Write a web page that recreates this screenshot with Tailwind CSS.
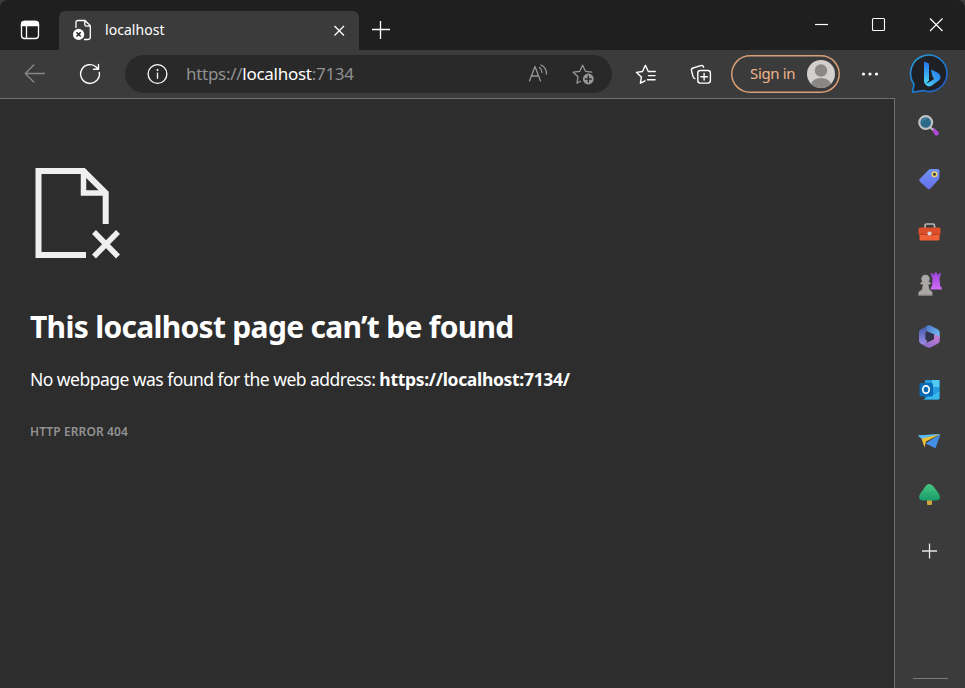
<!DOCTYPE html>
<html lang="en">
<head>
    <meta charset="UTF-8">
    <meta name="viewport" content="width=device-width, initial-scale=1.0">
    <title>localhost</title>
    <script src="https://cdn.jsdelivr.net/npm/@tailwindcss/browser@4"></script>
    <style>
        body { font-family: 'Noto Sans', 'Open Sans', sans-serif; }
    </style>
</head>
<body class="bg-[#3b3b3b] text-white h-screen overflow-hidden flex flex-col">

    <!-- Title bar -->
    <header class="h-[50px] shrink-0 bg-[#1f1f1f] rounded-t-lg flex">
        <button class="w-[59px] pt-[10px] flex justify-center">
            <svg class="w-10 h-10" viewBox="10 10 40 40" fill="none" stroke="#fff" stroke-width="1.3">
                <rect x="21.5" y="21.5" width="17" height="17" rx="3"/>
                <path d="M21.5 25.5V24.5a3 3 0 0 1 3-3h11a3 3 0 0 1 3 3V25.5z" fill="#fff"/>
                <path d="M26.5 26v12.5"/>
            </svg>
        </button>
        <div class="w-[300px] mt-[11px] bg-[#3b3b3b] rounded-t-md flex items-center pl-[13px] pr-[12px] pb-px">
            <svg class="w-5 h-[22px]" viewBox="72 19 20 22" fill="none" stroke="#fff" stroke-width="1.3" stroke-linejoin="round">
                <path d="M76 28v-5.5a2 2 0 0 1 2-2h7l5.3 5.3V37a2.5 2.5 0 0 1-2.5 2.5H84M84.8 20.7v3.8a1.6 1.6 0 0 0 1.6 1.6h3.7"/>
                <circle cx="78.6" cy="34.4" r="5.6" fill="#fff" stroke="none"/>
                <path d="M76.5 32.3l4.2 4.2m0-4.2l-4.2 4.2" stroke="#222" stroke-width="1.5"/>
            </svg>
            <span class="ml-[13px] text-[14px] leading-5 tracking-[0.05px]">localhost</span>
            <svg class="ml-auto w-4 h-4 mt-[1px]" viewBox="0 0 16 16" stroke="#fff" stroke-width="1.3"><path d="M3.5 3l9.5 9.5M13 3L3.5 12.5"/></svg>
        </div>
        <button class="w-[43px] pt-[19px] flex justify-center">
            <svg class="w-[22px] h-[22px]" viewBox="0 0 22 22" stroke="#fff" stroke-width="1.3"><path d="M2 10.5h18M10.5 2v18"/></svg>
        </button>
        <div class="ml-auto flex pt-[15px]">
            <svg class="w-[57px] h-5" viewBox="793 15 57 20" stroke="#fff" stroke-width="1.2"><path d="M815 24.5h13"/></svg>
            <svg class="w-[57px] h-5" viewBox="850 15 57 20" fill="none" stroke="#fff" stroke-width="1.1"><rect x="872.5" y="18.5" width="12" height="12" rx="1"/></svg>
            <svg class="w-[58px] h-5" viewBox="907 15 58 20" stroke="#fff" stroke-width="1.2"><path d="M930 18.5l12.5 12.5M942.5 18.5L930 31"/></svg>
        </div>
    </header>

    <!-- Toolbar -->
    <nav class="h-12 shrink-0 flex items-center">
        <svg class="w-[70px] h-12" viewBox="0 50 70 48" fill="none" stroke="#888" stroke-width="1.3" stroke-linecap="round" stroke-linejoin="round"><path d="M44.5 73.5H25.3M33.8 65l-8.5 8.5 8.5 8.5"/></svg>
        <svg class="w-[55px] h-12" viewBox="70 50 55 48" fill="none" stroke="#fff" stroke-width="1.4" stroke-linecap="round" stroke-linejoin="round"><path d="M99.3 72.5A9.4 9.4 0 1 1 96.5 67.2L98.2 69M98.5 64.5V69.3H93.5"/></svg>
        <div class="w-[487px] h-[38px] bg-[#292929] rounded-full flex items-center">
            <svg class="ml-[22px] w-[22px] h-[22px]" viewBox="0 0 22 22" fill="none" stroke="#fff" stroke-width="1.3">
                <circle cx="10.5" cy="11" r="9.4"/><path d="M10.5 9.6v6.2"/><circle cx="10.5" cy="6.9" r="1" fill="#fff" stroke="none"/>
            </svg>
            <span class="ml-[17px] text-[17px] leading-6 tracking-[-0.28px] text-[#919191] whitespace-nowrap">https://<span class="text-white">localhost</span>:7134</span>
            <svg class="ml-auto mr-[14px] w-[76px] h-[38px]" viewBox="522 55 76 38" fill="none" stroke="#979797" stroke-width="1.3" stroke-linecap="round" stroke-linejoin="round">
                <path d="M529.5 81l5.5-14.5 5.5 14.5M531.5 76h7M539.5 67.5q2.5 2 2.5 5M541 65q5.5 2.5 5.5 9"/>
                <path d="M580.5 81.3l-3.5 1.9 1-6.5-4.8-4.5 6.5-.9 2.9-6.1 2.9 6.1 6.3.9"/>
                <circle cx="588.3" cy="79" r="5.4" fill="#979797" stroke="none"/>
                <path d="M588.3 76v6M585.3 79h6" stroke="#292929" stroke-width="1.4"/>
            </svg>
        </div>
        <svg class="w-[69px] h-12" viewBox="612 50 69 48" fill="none" stroke="#fff" stroke-width="1.4" stroke-linecap="round" stroke-linejoin="round">
            <path d="M645 80.800l-4.600 2.400 1-6.300-4.900-4.500 6-.9 2.900-6.200 2.900 6.200h7M648.5 75.600h6.600M647.5 79.700h7.600"/>
        </svg>
        <svg class="w-[50px] h-12" viewBox="681 50 50 48" fill="none" stroke="#fff" stroke-width="1.4" stroke-linecap="round" stroke-linejoin="round">
            <rect x="697.8" y="70.5" width="12.6" height="12.6" rx="2.5"/>
            <path d="M704.1 73.5v6.600M700.8 76.800h6.600M694.8 78.5c-1.200-.3-1.5-1-1.800-2.200l-1.5-5.600c-.3-1.400.3-2.300 1.600-2.700l7.600-2.300c1.5-.4 2.600.2 3 1.5"/>
        </svg>
        <button class="w-[109px] h-[38px] inset-ring-[1.5px] inset-ring-[#d9a078] rounded-full flex items-center justify-between pl-[19px] pr-[5px] text-[#f0b48a]">
            <span class="pb-0.5 text-[15px] leading-5 tracking-[-0.35px] whitespace-nowrap">Sign in</span>
            <svg class="w-7 h-7" viewBox="0 0 28 28">
                <defs><clipPath id="face"><circle cx="14" cy="14" r="14"/></clipPath></defs>
                <g clip-path="url(#face)"><rect width="28" height="28" fill="#d2d0ce"/><circle cx="14" cy="10.5" r="6.2" fill="#8a8886"/><ellipse cx="14" cy="24.5" rx="10" ry="6.5" fill="#8a8886"/></g>
            </svg>
        </button>
        <svg class="w-[60px] h-12" viewBox="840 50 60 48" fill="#fff"><circle cx="863.5" cy="74" r="1.6"/><circle cx="870" cy="74" r="1.6"/><circle cx="876.5" cy="74" r="1.6"/></svg>
        <svg class="w-[65px] h-12" viewBox="896.5 50 65 48">
            <defs>
                <linearGradient id="ring" x1="0" y1="0" x2="1" y2="1"><stop stop-color="#2ea2dc"/><stop offset=".5" stop-color="#187fd3"/><stop offset="1" stop-color="#2754c4"/></linearGradient>
                <linearGradient id="bing" x1="0" y1="0" x2="0" y2="1"><stop stop-color="#2870ea"/><stop offset="1" stop-color="#4bd5f5"/></linearGradient>
                <linearGradient id="bing2" x1="0" y1="1" x2="1" y2="0"><stop stop-color="#4bd5f5"/><stop offset="1" stop-color="#2474ec"/></linearGradient>
            </defs>
            <path d="M909 92.3l1.5-8.3A18.2 18.2 0 1 1 919.5 90.6Z" fill="#1e2025" stroke="url(#ring)" stroke-width="1.6" stroke-linejoin="round"/>
            <path d="M920.5 61.5l4 1.6c.7.3 1 .8 1 1.5V80.5l-3.3 3.2c-1.1-.6-1.7-1.700-1.7-3z" fill="url(#bing)"/>
            <path d="M927.5 69.5l5.8 2.7c3.8 1.6 4.7 5.1 2.7 7.7l-8 5.8c-2 1.4-4.3 1-6-1.1-.8-.8-1.2-1.6-1.3-2.5 1.5 1.5 3 1.2 4.8.2l5.2-3.3-1.5-2.3c-.8-2.1-1.2-4.4-1.7-7.2z" fill="url(#bing2)"/>
        </svg>
    </nav>

    <div class="flex flex-1 min-h-0">
        <!-- Error page -->
        <main class="w-[895px] bg-[#2d2d2d] border-t border-r border-[#707070] pl-[30px] pt-[68px]">
            <svg class="w-[92px] h-[94px]" viewBox="30 167 92 94" fill="none" stroke="#efefef" stroke-width="6">
                <path d="M86 255H38.5V171H83.5L105.7 193V224"/>
                <path d="M83.5 169V193H107" stroke-width="5.5"/>
                <path d="M94 232l24 24.5M118 232L94 256.5" stroke-width="5.5"/>
            </svg>
            <h1 class="mt-[46px] text-[30px] leading-10 font-bold tracking-[-0.7px] whitespace-nowrap">This localhost page can’t be found</h1>
            <p class="mt-[20px] text-[17.5px] leading-6 whitespace-nowrap"><span class="tracking-[-0.53px]">No webpage was found for the web address: </span><strong class="tracking-[-0.32px]">https://localhost:7134/</strong></p>
            <p class="mt-[31px] text-[12px] leading-5 tracking-[0.1px] text-[#929292] font-semibold whitespace-nowrap">HTTP ERROR 404</p>
        </main>

        <!-- Sidebar -->
        <aside class="flex-1 flex flex-col items-center pt-[13px] pb-[9px] pr-0.5">
            <svg class="w-8 h-8 -mt-0.5" viewBox="913 109 32 32">
                <path d="M931.5 129l2.5-1 4.5 4q1 3-1.5 3.5-1 .3-2-.5z" fill="#b34bd8"/>
                <path d="M930 127l3 3" stroke="#bbb" stroke-width="2"/>
                <circle cx="925.7" cy="122.5" r="6.4" fill="#2d6a8a" stroke="#c0c3c5" stroke-width="2.2"/>
                <path d="M922.5 122a3.5 3.5 0 0 1 4-3" stroke="#4f91b2" fill="none"/>
            </svg>
            <svg class="w-8 h-8 mt-[22px]" viewBox="913 163 32 32">
                <defs><linearGradient id="tag" x1="0" y1="0" x2="0" y2="1"><stop stop-color="#6e91f8"/><stop offset="1" stop-color="#6670ea"/></linearGradient></defs>
                <path d="M919.7 179l8.8-9.1q.8-.8 2-.8l7.3-.1q1.7 0 1.7 1.7l-.2 7q0 1.2-.9 2.1l-8.2 9q-1.2 1.2-2.5 0l-8-7.3q-1.2-1.3 0-2.5z" fill="url(#tag)"/>
                <circle cx="934.5" cy="174.2" r="2.3" fill="#3a3c47" stroke="#f0d568" stroke-width="1.5"/>
            </svg>
            <svg class="w-8 h-8 mt-[21px]" viewBox="913 216 32 32">
                <path d="M925 228v-2.5q0-1.5 1.5-1.5h6.5q1.5 0 1.5 1.5v2.5" fill="none" stroke="#b9b5b3" stroke-width="1.7"/>
                <rect x="918.5" y="227.5" width="22" height="7.5" rx="1.5" fill="#dd4f2b"/>
                <path d="M919.5 234h20v5q0 1.5-1.5 1.5h-17q-1.5 0-1.5-1.5z" fill="#ef6036"/>
                <path d="M919 234q10.5 1.5 21 0" stroke="#b63920" fill="none"/>
                <circle cx="929.5" cy="233.5" r="2.1" fill="#d9d5d2"/>
            </svg>
            <svg class="w-8 h-8 mt-[20px]" viewBox="913 268 32 32">
                <defs><linearGradient id="rook" x1="0" y1="0" x2="0" y2="1"><stop stop-color="#9b45df"/><stop offset="1" stop-color="#d06cf8"/></linearGradient></defs>
                <path d="M930.5 273h2v1.5h2v-2h2.6v2h2V273h2l-1.6 5.5.7 7.5 1.5 1.5v2h-11v-2l1.3-1.5.5-7.5z" fill="url(#rook)"/>
                <g fill="#aaa8a6"><circle cx="925.5" cy="279" r="4.2"/><rect x="920.5" y="282" width="10" height="2.5" rx="1.2"/><path d="M923 284h5.3l1 5.5 3 2.5v3.5h-13.8V292l3.5-2.5z"/></g>
                <path d="M918.5 295h14" stroke="#898583"/>
            </svg>
            <svg class="w-8 h-8 mt-[20px]" viewBox="913 320 32 32">
                <defs>
                    <linearGradient id="m1" x1="0" y1="0" x2="0" y2="1"><stop stop-color="#4157a8"/><stop offset="1" stop-color="#9b8ce9"/></linearGradient>
                    <linearGradient id="m2" x1="0" y1="0" x2="1" y2="1"><stop stop-color="#4c75ca"/><stop offset="1" stop-color="#78c4f7"/></linearGradient>
                    <linearGradient id="m3" x1="0" y1="1" x2="1" y2="0"><stop stop-color="#8168cb"/><stop offset="1" stop-color="#ca80d2"/></linearGradient>
                </defs>
                <path d="M928 325.5l-7.5 4q-1.5 1-1.5 3v8q0 2 1.5 3l3 1.2q3.5-.7 3.5-4.2l-1.5-1v-6z" fill="url(#m1)"/>
                <path d="M926.5 326q2.5-1.5 5 0l6.5 3.5q1.7 1 1.7 3v6l-5.7-4-7.5-3.5z" fill="url(#m2)"/>
                <path d="M939.7 337v3.5q0 2-1.7 3l-6.5 3.6q-2.5 1.3-5 0l-5.5-3q3 .5 5.5-1l7.5-4.2v-4.5q5.5 1 5.7 2.6z" fill="url(#m3)"/>
                <path d="M926.5 331.5l7.5 3v4.2l-4.7 2.6-3.6-2.3v-5.2z" fill="#303249"/>
            </svg>
            <svg class="w-8 h-8 mt-[21px]" viewBox="913 373 32 32">
                <path d="M925 380h13q1.5 0 1.5 1.5V398q0 1.5-1.5 1.5h-13z" fill="#1687d4"/>
                <path d="M925 380h7v7h-7z" fill="#239cdf"/><path d="M932 380h7.5v7H932z" fill="#50c9f3"/><path d="M932 387h7.5v6H932z" fill="#249bdf"/>
                <path d="M923 399.5l16.5-8v6.5q0 1.5-1.5 1.5z" fill="#38b8ed"/>
                <rect x="919.5" y="383" width="13.5" height="13.5" rx="1.5" fill="#096ab5"/>
                <ellipse cx="926" cy="389.5" rx="3.2" ry="3.7" fill="none" stroke="#fff" stroke-width="1.7"/>
            </svg>
            <svg class="w-8 h-8 mt-[20px]" viewBox="913 425 32 32">
                <path d="M918 435.5l22.5-1.5-17 6.5z" fill="#48aaf0"/>
                <path d="M925.5 443.5L940.5 434l-5 14.3z" fill="#438fe8"/>
                <path d="M921.5 438.5l19-4.5-14.5 7.5-1.5 6z" fill="#eabf38"/>
                <path d="M918 435.5l22.5-1.5-19 4.5z" fill="#5dbcf4"/>
            </svg>
            <svg class="w-8 h-8 mt-[22px]" viewBox="913 479 32 32">
                <defs><linearGradient id="leaf" x1="0" y1="0" x2="0" y2="1"><stop stop-color="#4ac681"/><stop offset="1" stop-color="#169b68"/></linearGradient></defs>
                <rect x="927" y="499" width="5" height="6" rx="1" fill="#d3a440"/>
                <path d="M926.8 485q2.5-2 5 0 2.8 2 4.3 5 3.8 4.5 3.8 7 0 3.5-4 3.5h-12.8q-4 0-4-3.5 0-2.5 3.9-7 1.3-3 3.8-5z" fill="url(#leaf)"/>
            </svg>
            <svg class="w-8 h-8 mt-[24px]" viewBox="913 535 32 32" stroke="#e6e6e6" stroke-width="1.3"><path d="M922 551h15M929.5 543.5v15"/></svg>
            <div class="mt-auto ml-[3px] w-[35px] h-px bg-[#7b7b7b]"></div>
        </aside>
    </div>

</body>
</html>
